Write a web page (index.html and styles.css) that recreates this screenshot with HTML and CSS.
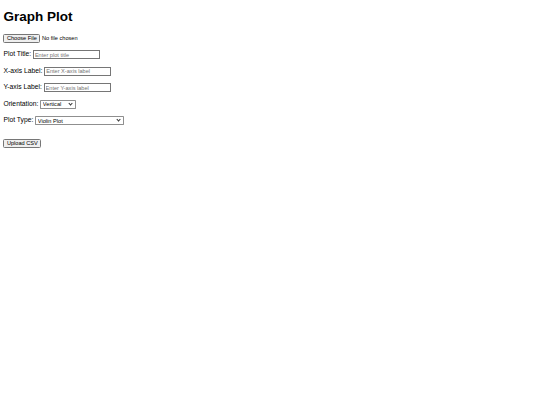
FILE: index.html
```html
<!DOCTYPE html>
<html>
<head>
<meta charset="utf-8">
<title>Graph Plot</title>
<link rel="stylesheet" href="styles.css">
</head>
<body>
<h1 class="title">Graph Plot</h1>
<form class="plot-form">
  <div class="row"><input type="file" class="file" accept=".csv"></div>
  <div class="row"><label>Plot Title:</label> <input type="text" class="txt" placeholder="Enter plot title"></div>
  <div class="row"><label>X-axis Label:</label> <input type="text" class="txt" placeholder="Enter X-axis label"></div>
  <div class="row"><label>Y-axis Label:</label> <input type="text" class="txt" placeholder="Enter Y-axis label"></div>
  <div class="row"><label>Orientation:</label> <span class="sel-wrap"><select class="sel sel-small"><option>Vertical</option><option>Horizontal</option></select></span></div>
  <div class="row"><label>Plot Type:</label> <span class="sel-wrap"><select class="sel sel-wide"><option>Violin Plot</option><option>Box Plot</option></select></span></div>
  <div class="row submit"><button type="button" class="btn">Upload CSV</button></div>
</form>
</body>
</html>
```
FILE: styles.css
```css
html { zoom: 0.421875; }
body {
  margin: 8px;
  font-family: "Liberation Sans", Arial, sans-serif;
  font-size: 16px;
  color: #000;
  background: #fff;
}
.title {
  font-size: 32px;
  margin: 14px 0 23px;
}
.row {
  margin-bottom: 18px;
}
.submit {
  margin-top: 33px;
}
.txt {
  width: 150px;
  font-family: "Liberation Sans", Arial, sans-serif;
}
.file, .btn {
  font-family: "Liberation Sans", Arial, sans-serif;
}
.sel-wrap {
  position: relative;
  display: inline-block;
  vertical-align: middle;
}
.sel {
  -webkit-appearance: none;
  appearance: none;
  font-family: "Liberation Sans", Arial, sans-serif;
  font-size: 13.33px;
  height: 21px;
  padding: 0 20px 0 4px;
  border: 1px solid #8f8f8f;
  border-radius: 2px;
  background: #fff;
  color: #000;
  display: block;
}
.sel-wrap::after {
  content: "";
  position: absolute;
  right: 10px;
  top: 5px;
  width: 5px;
  height: 5px;
  border-right: 2px solid #333;
  border-bottom: 2px solid #333;
  transform: rotate(45deg);
  pointer-events: none;
}
.sel-small {
  width: 85px;
}
.sel-wide {
  width: 211px;
}
```
